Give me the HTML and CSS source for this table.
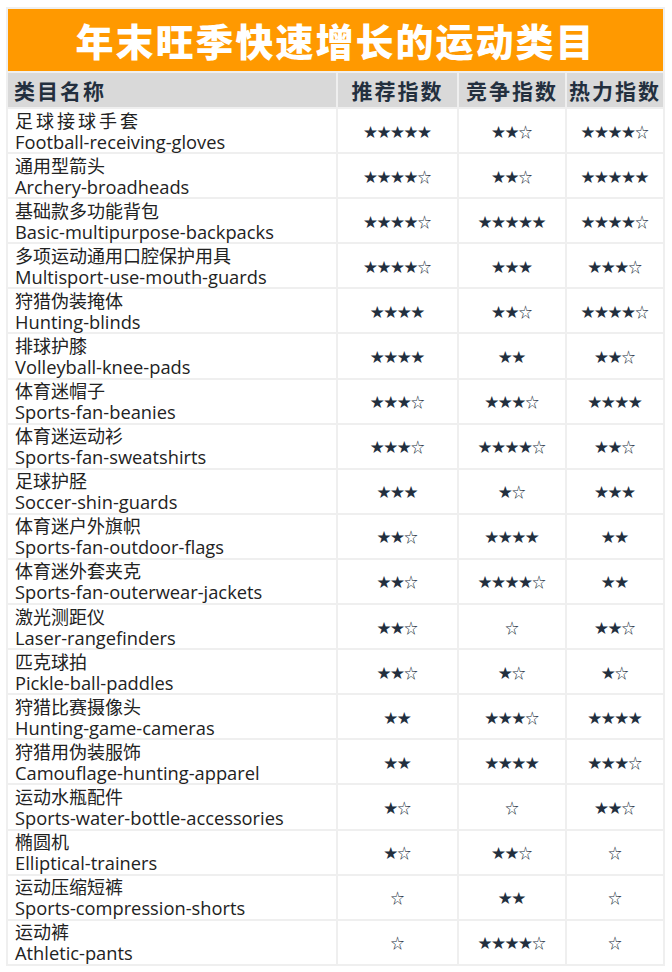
FILE: index.html
```html
<!DOCTYPE html>
<html lang="zh">
<head>
<meta charset="utf-8">
<link rel="stylesheet" href="styles.css">
</head>
<body>
<table class="board">
  <colgroup>
    <col class="c-name"><col class="c-a"><col class="c-b"><col class="c-c">
  </colgroup>
  <thead>
    <tr><th class="title" colspan="4">年末旺季快速增长的运动类目</th></tr>
    <tr class="head">
      <th class="h-name">类目名称</th><th>推荐指数</th><th>竞争指数</th><th>热力指数</th>
    </tr>
  </thead>
  <tbody>
    <tr><td class="name"><div class="zh spaced">足球接球手套</div><div class="en">Football-receiving-gloves</div></td><td>★★★★★</td><td>★★☆</td><td>★★★★☆</td></tr>
    <tr><td class="name"><div class="zh">通用型箭头</div><div class="en">Archery-broadheads</div></td><td>★★★★☆</td><td>★★☆</td><td>★★★★★</td></tr>
    <tr><td class="name"><div class="zh">基础款多功能背包</div><div class="en">Basic-multipurpose-backpacks</div></td><td>★★★★☆</td><td>★★★★★</td><td>★★★★☆</td></tr>
    <tr><td class="name"><div class="zh">多项运动通用口腔保护用具</div><div class="en">Multisport-use-mouth-guards</div></td><td>★★★★☆</td><td>★★★</td><td>★★★☆</td></tr>
    <tr><td class="name"><div class="zh">狩猎伪装掩体</div><div class="en">Hunting-blinds</div></td><td>★★★★</td><td>★★☆</td><td>★★★★☆</td></tr>
    <tr><td class="name"><div class="zh">排球护膝</div><div class="en">Volleyball-knee-pads</div></td><td>★★★★</td><td>★★</td><td>★★☆</td></tr>
    <tr><td class="name"><div class="zh">体育迷帽子</div><div class="en">Sports-fan-beanies</div></td><td>★★★☆</td><td>★★★☆</td><td>★★★★</td></tr>
    <tr><td class="name"><div class="zh">体育迷运动衫</div><div class="en">Sports-fan-sweatshirts</div></td><td>★★★☆</td><td>★★★★☆</td><td>★★☆</td></tr>
    <tr><td class="name"><div class="zh">足球护胫</div><div class="en">Soccer-shin-guards</div></td><td>★★★</td><td>★☆</td><td>★★★</td></tr>
    <tr><td class="name"><div class="zh">体育迷户外旗帜</div><div class="en">Sports-fan-outdoor-flags</div></td><td>★★☆</td><td>★★★★</td><td>★★</td></tr>
    <tr><td class="name"><div class="zh">体育迷外套夹克</div><div class="en">Sports-fan-outerwear-jackets</div></td><td>★★☆</td><td>★★★★☆</td><td>★★</td></tr>
    <tr><td class="name"><div class="zh">激光测距仪</div><div class="en">Laser-rangefinders</div></td><td>★★☆</td><td>☆</td><td>★★☆</td></tr>
    <tr><td class="name"><div class="zh">匹克球拍</div><div class="en">Pickle-ball-paddles</div></td><td>★★☆</td><td>★☆</td><td>★☆</td></tr>
    <tr><td class="name"><div class="zh">狩猎比赛摄像头</div><div class="en">Hunting-game-cameras</div></td><td>★★</td><td>★★★☆</td><td>★★★★</td></tr>
    <tr><td class="name"><div class="zh">狩猎用伪装服饰</div><div class="en">Camouflage-hunting-apparel</div></td><td>★★</td><td>★★★★</td><td>★★★☆</td></tr>
    <tr><td class="name"><div class="zh">运动水瓶配件</div><div class="en">Sports-water-bottle-accessories</div></td><td>★☆</td><td>☆</td><td>★★☆</td></tr>
    <tr><td class="name"><div class="zh">椭圆机</div><div class="en">Elliptical-trainers</div></td><td>★☆</td><td>★★☆</td><td>☆</td></tr>
    <tr><td class="name"><div class="zh">运动压缩短裤</div><div class="en">Sports-compression-shorts</div></td><td>☆</td><td>★★</td><td>☆</td></tr>
    <tr><td class="name"><div class="zh">运动裤</div><div class="en">Athletic-pants</div></td><td>☆</td><td>★★★★☆</td><td>☆</td></tr>
  </tbody>
</table>
</body>
</html>
```
FILE: styles.css
```css
html, body {
  margin: 0;
  padding: 0;
  background: #ffffff;
}
body {
  padding: 7px 0 0 6px;
  font-family: "Open Sans", "Noto Sans CJK SC", sans-serif;
  color: #222;
}
.board {
  width: 659px;
  border-collapse: separate;
  border-spacing: 2px;
  background: #efefef;
  table-layout: fixed;
}
.c-name { width: 328px; }
.c-a { width: 119px; }
.c-b { width: 106px; }
.c-c { width: 96px; }
.title {
  background: #ff9900;
  color: #ffffff;
  height: 62px;
  padding: 0;
  font-family: "Noto Sans CJK SC", sans-serif;
  font-weight: 900;
  font-size: 38px;
  letter-spacing: 2px;
  line-height: 58px;
  text-align: center;
}
.head th {
  background: #d9d9d9;
  color: #232f3e;
  height: 34px;
  padding: 0;
  font-family: "Noto Sans CJK SC", sans-serif;
  font-weight: 700;
  font-size: 21px;
  letter-spacing: 2px;
  line-height: 32px;
  text-align: center;
  white-space: nowrap;
}
.head th.h-name {
  text-align: left;
  padding-left: 6px;
}
tbody td {
  background: #ffffff;
  height: 43.1px;
  padding: 0;
  text-align: center;
  font-family: "Noto Sans CJK SC", sans-serif;
  font-size: 13.5px;
  color: #232f3e;
  white-space: nowrap;
}
tbody td.name {
  text-align: left;
  padding-left: 7px;
  color: #222;
}
.zh {
  font-family: "Noto Sans CJK SC", sans-serif;
  font-size: 18px;
  line-height: 21px;
}
.zh.spaced { letter-spacing: 3px; }
.en {
  font-family: "Open Sans", sans-serif;
  font-size: 18.3px;
  line-height: 21px;
}
```
